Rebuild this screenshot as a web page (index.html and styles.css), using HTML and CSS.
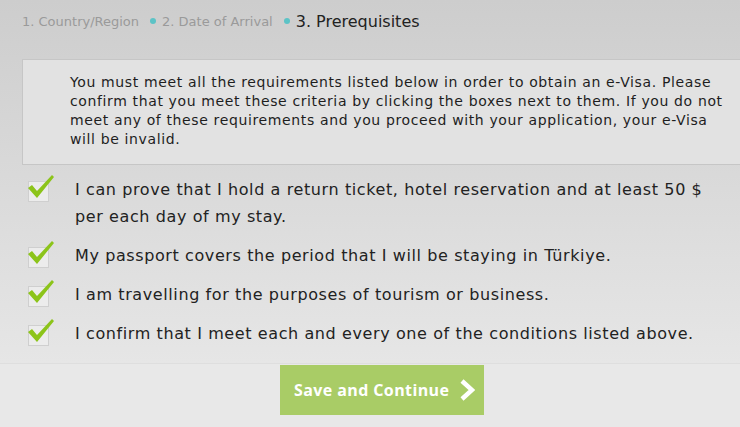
FILE: index.html
```html
<html lang="en">
<head>
    <meta charset="UTF-8">
    <meta name="viewport" content="width=device-width, initial-scale=1.0">
    <title>e-Visa Application - Prerequisites</title>
    <link rel="stylesheet" href="styles.css">
</head>
<body>
    <div class="page">
        <div class="steps">
            <span class="step">1. Country/Region</span>
            <span class="dot"></span>
            <span class="step">2. Date of Arrival</span>
            <span class="dot"></span>
            <span class="step active">3. Prerequisites</span>
        </div>

        <div class="notice">
            <p>You must meet all the requirements listed below in order to obtain an e-Visa. Please
            confirm that you meet these criteria by clicking the boxes next to them. If you do not
            meet any of these requirements and you proceed with your application, your e-Visa
            will be invalid.</p>
        </div>

        <ul class="checklist">
            <li>
                <span class="box"><svg viewBox="0 0 30 30" width="30" height="30"><path d="M2 15 L6 12 L11 18 L26 2 L28 4 L11 25 Z" fill="#8cc41a"/></svg></span>
                <span class="label">I can prove that I hold a return ticket, hotel reservation and at least 50 $ per each day of my stay.</span>
            </li>
            <li>
                <span class="box"><svg viewBox="0 0 30 30" width="30" height="30"><path d="M2 15 L6 12 L11 18 L26 2 L28 4 L11 25 Z" fill="#8cc41a"/></svg></span>
                <span class="label">My passport covers the period that I will be staying in Türkiye.</span>
            </li>
            <li>
                <span class="box"><svg viewBox="0 0 30 30" width="30" height="30"><path d="M2 15 L6 12 L11 18 L26 2 L28 4 L11 25 Z" fill="#8cc41a"/></svg></span>
                <span class="label">I am travelling for the purposes of tourism or business.</span>
            </li>
            <li>
                <span class="box"><svg viewBox="0 0 30 30" width="30" height="30"><path d="M2 15 L6 12 L11 18 L26 2 L28 4 L11 25 Z" fill="#8cc41a"/></svg></span>
                <span class="label">I confirm that I meet each and every one of the conditions listed above.</span>
            </li>
        </ul>
    </div>

    <div class="actions">
        <button class="btn">Save and Continue
            <svg viewBox="0 0 16 22" width="16" height="22"><path d="M3 2 L13 11 L3 20" fill="none" stroke="#fff" stroke-width="4.5"/></svg>
        </button>
    </div>
</body>
</html>
```

FILE: styles.css
```css
body {
    margin: 0;
    overflow: hidden;
    font-family: "DejaVu Sans", Verdana, sans-serif;
    background-color: #e8e8e8;
    color: #222;
}
.page {
    background: linear-gradient(#cdcdcd, #e6e6e6);
    padding: 11px 0 4px 22px;
    border-bottom: 1px solid #dedede;
}
.steps {
    display: flex;
    align-items: center;
    height: 20px;
    font-size: 13px;
    color: #9a9a9a;
}
.dot {
    width: 6px;
    height: 6px;
    border-radius: 50%;
    background-color: #5cc3c6;
    margin: 0 6px 0 11px;
}
.step.active {
    font-size: 16px;
    color: #222;
}
.notice {
    margin: 28px -20px 0 0;
    padding: 13px 20px 15px 47px;
    background-color: #e2e2e2;
    border: 1px solid #c6c6c6;
    font-size: 14px;
    line-height: 19px;
    letter-spacing: 0.63px;
    color: #1e1e1e;
}
.notice p {
    margin: 0;
    max-width: 656px;
}
.checklist {
    list-style: none;
    margin: 11px 0 0 0;
    padding: 0;
}
.checklist li {
    display: flex;
    align-items: flex-start;
    margin-bottom: 12px;
}
.box {
    position: relative;
    flex: none;
    width: 19px;
    height: 19px;
    margin: 5px 26px 0 6px;
    background-color: #ececec;
    border: 1px solid #cfcfcf;
}
.box svg {
    position: absolute;
    left: -3px;
    top: -9px;
}
.label {
    font-size: 16px;
    line-height: 27px;
    letter-spacing: 0.6px;
    max-width: 645px;
}
.actions {
    display: flex;
    justify-content: center;
    padding: 1px 0 0 24px;
}
.btn {
    display: flex;
    align-items: center;
    gap: 10px;
    width: 204px;
    height: 50px;
    padding: 0 0 0 14px;
    background-color: #a9cc66;
    color: white;
    border: none;
    font-family: "Open Sans", sans-serif;
    font-weight: bold;
    font-size: 16px;
    letter-spacing: 0.4px;
    white-space: nowrap;
    cursor: pointer;
}
```
